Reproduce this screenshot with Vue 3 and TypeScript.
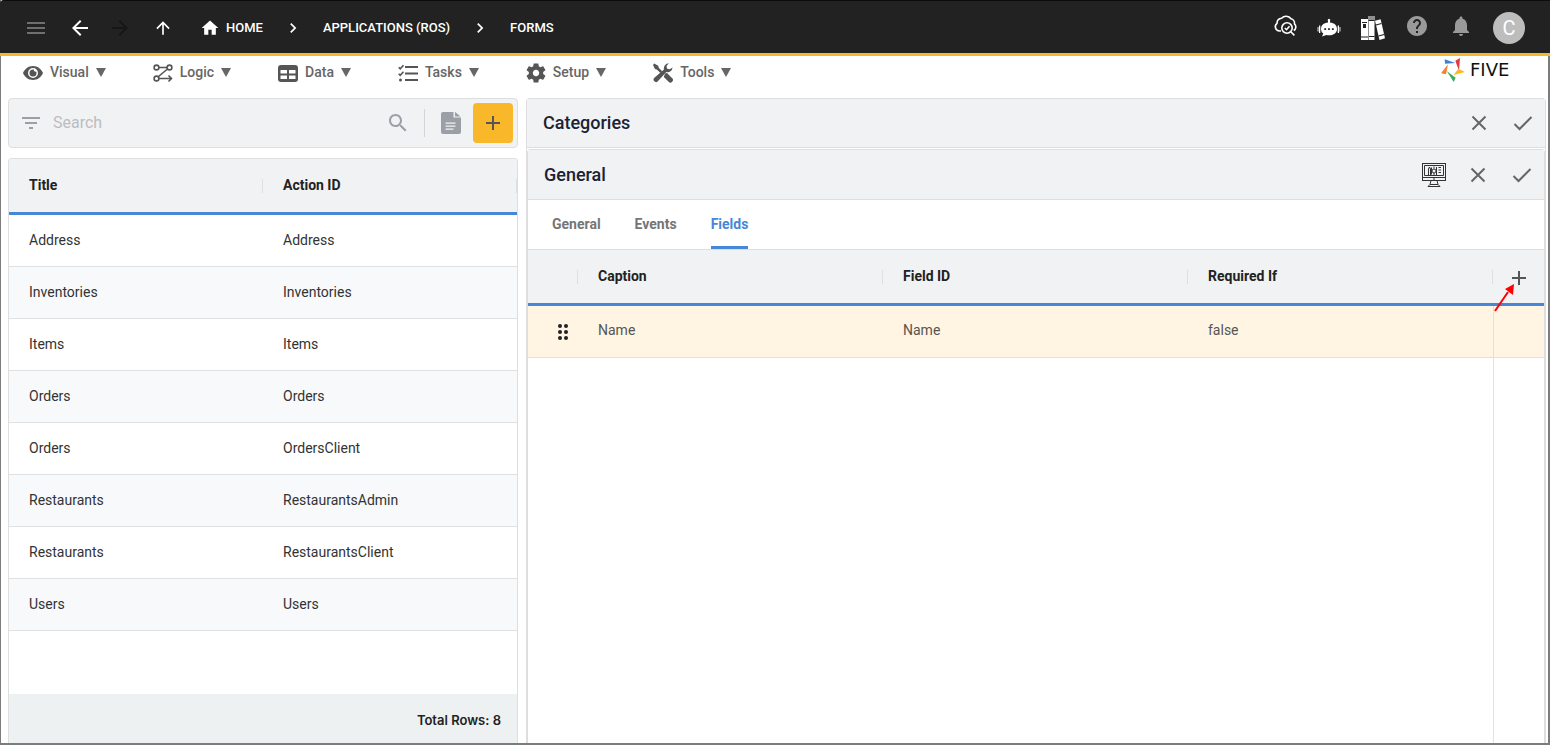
<script setup lang="ts">
import { ref } from 'vue'

interface MenuItem {
  label: string
  icon: string
}

interface ActionRow {
  title: string
  actionId: string
}

const menu: MenuItem[] = [
  { label: 'Visual', icon: 'eye' },
  { label: 'Logic', icon: 'logic' },
  { label: 'Data', icon: 'data' },
  { label: 'Tasks', icon: 'tasks' },
  { label: 'Setup', icon: 'setup' },
  { label: 'Tools', icon: 'tools' },
]

const rows: ActionRow[] = [
  { title: 'Address', actionId: 'Address' },
  { title: 'Inventories', actionId: 'Inventories' },
  { title: 'Items', actionId: 'Items' },
  { title: 'Orders', actionId: 'Orders' },
  { title: 'Orders', actionId: 'OrdersClient' },
  { title: 'Restaurants', actionId: 'RestaurantsAdmin' },
  { title: 'Restaurants', actionId: 'RestaurantsClient' },
  { title: 'Users', actionId: 'Users' },
]

const tabs: string[] = ['General', 'Events', 'Fields']
const activeTab = ref('Fields')
const search = ref('')
</script>

<template>
  <div class="app">
    <header class="topbar">
      <button class="icon-btn dim" aria-label="Menu">
        <svg viewBox="0 0 24 24"><path d="M3 18h18v-2H3v2zm0-5h18v-2H3v2zm0-7v2h18V6H3z" /></svg>
      </button>
      <button class="icon-btn" aria-label="Back">
        <svg viewBox="0 0 24 24"><path d="M20 11H7.83l5.59-5.59L12 4l-8 8 8 8 1.41-1.41L7.83 13H20v-2z" /></svg>
      </button>
      <button class="icon-btn off" aria-label="Forward">
        <svg viewBox="0 0 24 24"><path d="M12 4l-1.41 1.41L16.17 11H4v2h12.17l-5.58 5.59L12 20l8-8z" /></svg>
      </button>
      <button class="icon-btn up" aria-label="Up">
        <svg viewBox="0 0 24 24"><path d="M4 12l1.41 1.41L11 7.83V20h2V7.83l5.58 5.59L20 12l-8-8-8 8z" /></svg>
      </button>
      <nav class="crumbs" aria-label="Breadcrumb">
        <a href="#" class="crumb home">
          <svg viewBox="0 0 24 24"><path d="M10 20v-6h4v6h5v-8h3L12 3 2 12h3v8z" /></svg>HOME</a>
        <svg class="chev" viewBox="0 0 24 24"><path d="M10 6 8.59 7.41 13.17 12l-4.58 4.59L10 18l6-6z" /></svg>
        <a href="#" class="crumb">APPLICATIONS (ROS)</a>
        <svg class="chev" viewBox="0 0 24 24"><path d="M10 6 8.59 7.41 13.17 12l-4.58 4.59L10 18l6-6z" /></svg>
        <a href="#" class="crumb">FORMS</a>
      </nav>
      <div class="actions">
        <button class="icon-btn raised" aria-label="Inspect cloud">
          <svg viewBox="0 0 24 24" class="line">
            <path d="M8 17H6.500A4.300 4.300 0 0 1 4 9.300 5.200 5.200 0 0 1 8.600 4.200 6 6 0 0 1 18 4.800 4.500 4.500 0 0 1 21.500 9.800 4.200 4.200 0 0 1 20.800 16.500" />
            <circle cx="14" cy="14" r="5.200" /><path d="M11.800 14l1.700 1.700 3-3.400M17.800 17.800l3.600 3.600" />
          </svg>
        </button>
        <button class="icon-btn" aria-label="Assistant">
          <svg viewBox="0 0 24 24">
            <path fill-rule="evenodd" d="M11 6.500V5a1.300 1.300 0 1 1 2 0v1.500c4.500.3 7 3 7 6.400 0 4-3.500 6.300-8 6.300-1 0-1.800-.1-2.600-.3L5 20.500l1.300-3C4.800 16.400 4 14.800 4 12.900 4 9.500 6.500 6.800 11 6.500zM7.300 12.200v1.800h1.800v-1.800zm3.800 0v1.800h1.800v-1.800zm3.800 0v1.800h1.800v-1.800z" />
            <path d="M2 9.500h1.300V17H2zM.6 11H1.500v4.500H.6zM20.700 9.500H22V17h-1.300zM22.500 11h.9v4.500h-.9z" />
          </svg>
        </button>
        <button class="icon-btn" aria-label="Library">
          <svg viewBox="0 0 24 24">
            <path d="M0 3h7v21H0z" /><path d="M7.500 0h6v24h-6z" /><path d="M14 4.800l5.600-1.500L24 22.200 18.500 24z" />
            <path class="cut" d="M1 6h5v1H1zM2 8h3v4H2zM0 20.500h7v1H0zM7.500 4h6v1h-6zM7.500 20h6v1h-6zM14.800 8.600l5.500-1.500.3 1-5.500 1.500zM17.400 19.600l5.500-1.500.3 1-5.500 1.500z" />
            <path class="shade" d="M7.500 0h6v4h-6zM7 5h1v19H7z" />
          </svg>
        </button>
        <button class="icon-btn raised gray" aria-label="Help">
          <svg viewBox="0 0 24 24"><path d="M12 2C6.480 2 2 6.480 2 12s4.480 10 10 10 10-4.480 10-10S17.520 2 12 2zm1 17h-2v-2h2v2zm2.070-7.750-.9.920C13.450 12.900 13 13.500 13 15h-2v-.5c0-1.100.450-2.100 1.170-2.830l1.240-1.260c.370-.360.590-.860.590-1.410 0-1.100-.9-2-2-2s-2 .9-2 2H8c0-2.210 1.790-4 4-4s4 1.790 4 4c0 .880-.360 1.680-.930 2.250z" /></svg>
        </button>
        <button class="icon-btn raised gray" aria-label="Notifications">
          <svg viewBox="0 0 24 24"><path d="M12 22c1.100 0 2-.9 2-2h-4c0 1.100.9 2 2 2zm6-6v-5c0-3.070-1.630-5.640-4.500-6.320V4c0-.830-.670-1.500-1.500-1.500s-1.500.670-1.500 1.500v.680C7.640 5.360 6 7.920 6 11v5l-2 2v1h16v-1l-2-2z" /></svg>
        </button>
        <button class="avatar" aria-label="Account">C</button>
      </div>
    </header>

    <nav class="menubar" aria-label="Main">
      <button v-for="item in menu" :key="item.label" class="menu-item">
        <svg v-if="item.icon === 'eye'" viewBox="0 0 20 20">
          <path fill-rule="evenodd" d="M10 3C5.500 3 1.700 5.800 0 10c1.700 4.200 5.500 7 10 7s8.300-2.800 10-7c-1.700-4.200-5.500-7-10-7zm0 2a5 5 0 1 1 0 10 5 5 0 0 1 0-10zm0 1.500a3.500 3.500 0 1 0 3.500 3.500c0-.5-.1-1-.3-1.400A1.800 1.800 0 0 1 10.800 6.600 3 3 0 0 0 10 6.500z" />
        </svg>
        <svg v-else-if="item.icon === 'logic'" viewBox="0 0 20 20" class="outline">
          <circle cx="3.500" cy="4.500" r="2.400" /><circle cx="16.500" cy="4.500" r="2.400" /><circle cx="3.500" cy="15.500" r="2.400" />
          <path d="M6 4.500h8M14.500 6L5.500 13.500M6 15.500h12M15.500 12.500l3 3-3 3" />
        </svg>
        <svg v-else-if="item.icon === 'data'" viewBox="0 0 20 20">
          <path fill-rule="evenodd" d="M3 2h14a3 3 0 0 1 3 3v11a3 3 0 0 1-3 3H3a3 3 0 0 1-3-3V5a3 3 0 0 1 3-3zm-.5 5v3.500H9V7zm8.500 0v3.500h6.500V7zm-8.500 5.500V16H9v-3.500zm8.500 0V16h6.500v-3.500z" />
        </svg>
        <svg v-else-if="item.icon === 'tasks'" viewBox="0 0 20 20">
          <path d="M7 3h13v2H7zM7 9.500h13v2H7zM7 16h13v2H7z" /><circle cx="2.500" cy="17" r="1.500" />
          <path class="tick" d="M.7 4.300l1.500 1.500L5.500 2.200M.7 10.800l1.500 1.500 3.300-3.600" />
        </svg>
        <svg v-else-if="item.icon === 'setup'" viewBox="2 2 20 20">
          <path d="M19.140 12.940c.040-.3.060-.610.060-.940 0-.320-.020-.640-.070-.940l2.030-1.580c.180-.140.230-.410.120-.610l-1.920-3.320c-.120-.220-.370-.290-.590-.220l-2.390.960c-.5-.380-1.030-.7-1.620-.940l-.360-2.540c-.040-.240-.240-.410-.480-.410h-3.840c-.240 0-.430.170-.470.410l-.360 2.540c-.590.240-1.130.570-1.620.940l-2.390-.960c-.220-.080-.470 0-.590.220L2.740 8.870c-.120.210-.080.470.120.610l2.030 1.580c-.050.3-.090.630-.090.940s.020.640.070.940l-2.030 1.580c-.180.140-.230.410-.120.610l1.920 3.320c.120.220.370.290.590.220l2.390-.960c.5.380 1.030.7 1.620.940l.360 2.540c.050.240.240.410.480.410h3.840c.240 0 .440-.170.470-.410l.360-2.540c.590-.240 1.130-.560 1.620-.940l2.390.960c.220.080.470 0 .590-.220l1.920-3.320c.120-.220.070-.470-.120-.610l-2.010-1.580zM12 15.200c-1.800 0-3.200-1.400-3.200-3.200s1.400-3.200 3.200-3.200 3.200 1.400 3.200 3.200-1.400 3.200-3.200 3.200z" />
        </svg>
        <svg v-else viewBox="0 0 20 20">
          <path d="M1.200.5l4 2.300.7 2.100 3.300 3.300-1.800 1.800L4.100 6.700 2 6 0 2z" />
          <path d="M12 10.500l2-.6 5.200 5.300a2.500 2.500 0 0 1-3.600 3.600L10.800 14z" />
          <path d="M19.600 4.600A5 5 0 0 1 13.300 9L4.600 18.600a2.500 2.500 0 0 1-3.500-3.500L11 6.500A5 5 0 0 1 15.800.3L13.500 3.100l.6 2.700 2.600.5z" />
        </svg>
        <span>{{ item.label }}</span>
        <svg class="caret" viewBox="0 0 10 9"><path d="M0 0h10L5 9z" /></svg>
      </button>
      <div class="brand">
        <svg viewBox="573 173 72 72">
          <path fill="#3f7fd6" d="M584 177l32 11-31 2z" />
          <path fill="#e23b3b" d="M616 181l14-8-3 38z" />
          <path fill="#f7b92b" d="M625 205l20 10-34 9z" />
          <path fill="#3fae5a" d="M590 212l27 20-6 13z" />
          <path fill="#f5822b" d="M573 219l21-27-6 30z" />
        </svg>
        <span>FIVE</span>
      </div>
    </nav>

    <main class="workspace">
      <section class="list">
        <div class="searchbar">
          <svg class="filter" viewBox="0 0 24 24"><path d="M10 18h4v-2h-4v2zM3 6v2h18V6H3zm3 7h12v-2H6v2z" /></svg>
          <input v-model="search" type="text" placeholder="Search" aria-label="Search" />
          <button class="icon-btn muted" aria-label="Run search">
            <svg viewBox="0 0 24 24"><path d="M15.500 14h-.790l-.280-.270C15.410 12.590 16 11.110 16 9.500 16 5.910 13.090 3 9.500 3S3 5.910 3 9.500 5.910 16 9.500 16c1.610 0 3.090-.590 4.230-1.570l.270.280v.790l5 4.990L20.490 19l-4.990-5zm-6 0C7.010 14 5 11.990 5 9.500S7.010 5 9.500 5 14 7.010 14 9.500 11.990 14 9.500 14z" /></svg>
          </button>
          <span class="divider"></span>
          <button class="icon-btn muted" aria-label="Report">
            <svg viewBox="0 0 24 24"><path fill-rule="evenodd" d="M5 1h9.500v5.500H22V21a2 2 0 0 1-2 2H4a2 2 0 0 1-2-2V3a2 2 0 0 1 2-2zm1.500 10.500v1.300h10v-1.300zm0 3v1.300h10v-1.300zm0 3v1.300h8v-1.300zM16 .8L21.500 5.500H16z" /></svg>
          </button>
          <button class="add" aria-label="Add record">
            <svg viewBox="0 0 24 24"><path d="M19 13h-6v6h-2v-6H5v-2h6V5h2v6h6v2z" /></svg>
          </button>
        </div>

        <div class="card">
          <table class="grid">
            <thead>
              <tr><th>Title</th><th>Action ID</th></tr>
            </thead>
            <tbody>
              <tr v-for="(row, i) in rows" :key="i">
                <td>{{ row.title }}</td>
                <td>{{ row.actionId }}</td>
              </tr>
            </tbody>
          </table>
          <footer class="total">Total Rows: 8</footer>
        </div>
      </section>

      <section class="detail">
        <div class="bar">
          <h1>Categories</h1>
          <button class="icon-btn tool" aria-label="Cancel">
            <svg viewBox="0 0 24 24"><path d="M5.500 5.500l13 13M18.500 5.500l-13 13" /></svg>
          </button>
          <button class="icon-btn tool" aria-label="Save">
            <svg viewBox="0 0 24 24"><path d="M3.500 13l5 5L20.500 6" /></svg>
          </button>
        </div>

        <div class="inner">
          <div class="bar">
            <h2>General</h2>
            <button class="icon-btn" aria-label="Preview form">
              <svg viewBox="0 0 24 24" class="monitor">
                <rect x=".5" y=".5" width="23" height="17" /><path d="M.5 14.500h23M9 17.500l-1 4h8l-1-4M6 23.500h12M6 23.500l2-2M18 23.500l-2-2" />
                <path d="M2.500 2.500h19v10h-19zM6.500 12V6l1-2 1 2v6M9.500 4.500v7M14.500 4v8M16.500 4.500h2.500M16.500 7h2.500M16.500 9.500h2.500M11 16h2M12 3.500v2M12 10v2" />
                <circle cx="12" cy="8" r="2" />
              </svg>
            </button>
            <button class="icon-btn tool" aria-label="Cancel form">
              <svg viewBox="0 0 24 24"><path d="M5.500 5.500l13 13M18.500 5.500l-13 13" /></svg>
            </button>
            <button class="icon-btn tool" aria-label="Save form">
              <svg viewBox="0 0 24 24"><path d="M3.500 13l5 5L20.500 6" /></svg>
            </button>
          </div>

          <div class="tabs" role="tablist">
            <button
              v-for="tab in tabs"
              :key="tab"
              role="tab"
              :aria-selected="tab === activeTab"
              :class="['tab', { active: tab === activeTab }]"
              @click="activeTab = tab"
            >{{ tab }}</button>
          </div>

          <table class="grid fields">
            <colgroup>
              <col class="narrow" /><col /><col /><col /><col class="action" />
            </colgroup>
            <thead>
              <tr>
                <th></th>
                <th>Caption</th>
                <th>Field ID</th>
                <th>Required If</th>
                <th class="last">
                  <button class="icon-btn plus" aria-label="Add field">
                    <svg viewBox="0 0 24 24"><path d="M19 13h-6v6h-2v-6H5v-2h6V5h2v6h6v2z" /></svg>
                  </button>
                  <svg class="pointer" viewBox="0 0 20 28">
                    <path class="shaft" d="M1 27L14 8" /><path d="M20 0l-1 11-8-6z" />
                  </svg>
                </th>
              </tr>
            </thead>
            <tbody>
              <tr>
                <td class="handle">
                  <svg viewBox="0 0 24 24">
                    <circle cx="9" cy="6" r="2" /><circle cx="15" cy="6" r="2" /><circle cx="9" cy="12" r="2" />
                    <circle cx="15" cy="12" r="2" /><circle cx="9" cy="18" r="2" /><circle cx="15" cy="18" r="2" />
                  </svg>
                </td>
                <td>Name</td>
                <td>Name</td>
                <td>false</td>
                <td class="gutter"></td>
              </tr>
            </tbody>
          </table>
          <div class="rest"><div class="gutter"></div></div>
        </div>
      </section>
    </main>
  </div>
</template>

<style>
body {
  margin: 0;
}
</style>

<style scoped>
.app,
.app * {
  box-sizing: border-box;
}
.app {
  display: flex;
  flex-direction: column;
  min-height: 100vh;
  background: #fff;
  color: #333;
  font-family: Roboto, "Liberation Sans", sans-serif;
  font-size: 14px;
  line-height: 20px;
  border: solid #7c7c7c;
  border-width: 0 2px 2px 1px;
}
button {
  padding: 0;
  border: 0;
  background: none;
  color: inherit;
  font: inherit;
  cursor: pointer;
}
svg {
  display: block;
  flex: none;
  fill: currentColor;
}
.icon-btn {
  flex: none;
  width: 24px;
  height: 24px;
}
.icon-btn svg {
  width: 24px;
  height: 24px;
}

/* top bar */
.topbar {
  display: flex;
  align-items: center;
  height: 56px;
  margin: 0 -2px 0 -1px;
  padding: 2px 25px 0 24px;
  gap: 20px;
  background: #222;
  color: #fff;
  border-top: 1px solid #0c0c0c;
  border-bottom: 3px solid #f8b82a;
  border-top-left-radius: 4px;
}
.topbar .dim {
  color: #6f6f6f;
}
.topbar .off {
  margin-left: -4px;
  color: #161616;
}
.topbar .up svg {
  width: 20px;
  margin: 0 1px;
}
.crumbs {
  display: flex;
  align-items: center;
  gap: 18px;
  margin-left: 4px;
  font-size: 13px;
  font-weight: 500;
}
.crumb {
  display: flex;
  align-items: center;
  gap: 6px;
  color: #fff;
  text-decoration: none;
}
.home svg {
  width: 20px;
  height: 20px;
}
.chev {
  width: 24px;
  height: 20px;
}
.actions {
  display: flex;
  align-items: center;
  gap: 20px;
  margin-left: auto;
}
.raised {
  margin-bottom: 4px;
}
.gray {
  color: #9a9a9a;
}
.line {
  fill: none;
  stroke: #fff;
  stroke-width: 1.6;
}
.cut {
  fill: #222;
}
.shade {
  fill: #8f8f8f;
}
.avatar {
  width: 32px;
  height: 32px;
  border-radius: 50%;
  background: #bdbdbd;
  color: #fff;
  font-size: 20px;
}

/* menu bar */
.menubar {
  display: flex;
  align-items: center;
  height: 42px;
  padding: 0 18px 10px 22px;
  gap: 47px;
}
.menu-item {
  display: flex;
  align-items: center;
  gap: 7px;
  color: #666;
  font-weight: 500;
}
.menu-item svg {
  width: 20px;
  height: 20px;
  margin-top: 2px;
  color: #555;
}
.menu-item .caret {
  width: 10px;
  height: 9px;
  margin-top: 0;
  color: #666;
}
.menu-item .outline,
.tick {
  fill: none;
  stroke: #555;
  stroke-width: 1.6;
}
.brand {
  display: flex;
  align-items: center;
  gap: 5px;
  margin: 0 0 4px auto;
  color: #111;
  font-family: "DejaVu Sans", sans-serif;
  font-size: 18px;
}
.brand svg {
  width: 24px;
  height: 24px;
}
.brand span {
  width: 60px;
}

/* workspace */
.workspace {
  display: grid;
  grid-template-columns: 1fr 2fr;
  flex: 1;
  gap: 8px;
  padding: 0 2px 0 7px;
}
.list {
  display: flex;
  flex-direction: column;
  gap: 10px;
}
.searchbar {
  display: flex;
  align-items: center;
  height: 50px;
  padding: 0 4px 0 10px;
  background: #f1f2f4;
  border: 1px solid #dedede;
  border-radius: 4px;
}
.filter {
  width: 24px;
  height: 24px;
  color: #9aa0a6;
}
.searchbar input {
  flex: 1;
  min-width: 0;
  padding: 0 10px;
  border: 0;
  outline: 0;
  background: none;
  color: #333;
  font: inherit;
  font-size: 16px;
}
.searchbar input::placeholder {
  color: #bcbdbf;
  opacity: 1;
}
.muted {
  color: #9aa0a6;
}
.divider {
  width: 1px;
  height: 28px;
  margin: 0 14px;
  background: #d4d5d7;
}
.add {
  display: flex;
  align-items: center;
  justify-content: center;
  width: 40px;
  height: 40px;
  margin-left: 10px;
  border-radius: 4px;
  background: #f8b82a;
  color: #555;
}
.add svg {
  width: 24px;
  height: 24px;
}
.card {
  display: flex;
  flex-direction: column;
  flex: 1;
  border: 1px solid #dedede;
  border-bottom: 0;
  border-radius: 4px 4px 0 0;
  overflow: hidden;
}
.grid {
  width: 100%;
  table-layout: fixed;
  border-spacing: 0;
}
.grid th {
  position: relative;
  height: 56px;
  padding: 0 20px 2px;
  background: #f1f2f4;
  border-bottom: 3px solid #4787d7;
  color: #222;
  font-weight: 700;
  text-align: left;
}
.grid th::after {
  content: "";
  position: absolute;
  top: 20px;
  right: -1px;
  width: 2px;
  height: 14px;
  background: #dedfe1;
}
.grid td {
  height: 52px;
  padding: 0 20px 2px;
  border-bottom: 1px solid #e0e1e3;
}
.grid tbody tr:nth-child(even) {
  background: #f8f9fb;
}
.total {
  margin-top: auto;
  height: 49px;
  padding: 0 16px;
  background: #edf1f2;
  color: #222;
  font-family: Inter, sans-serif;
  font-size: 13px;
  font-weight: 600;
  line-height: 52px;
  text-align: right;
}

/* detail */
.detail {
  display: flex;
  flex-direction: column;
  gap: 1px;
  border: 1px solid #dedede;
  border-bottom: 0;
  border-radius: 4px 4px 0 0;
}
.bar {
  display: flex;
  align-items: center;
  gap: 20px;
  height: 49px;
  padding: 0 10px 0 16px;
  background: #f1f2f4;
  border-bottom: 1px solid #dedede;
}
.inner .bar {
  height: 50px;
}
h1,
h2 {
  flex: 1;
  margin: 0;
  color: #1b2233;
  font-size: 18px;
  font-weight: 500;
  line-height: 24px;
}
.tool svg {
  fill: none;
  stroke: #666;
  stroke-width: 2;
}
.monitor {
  fill: none;
  stroke: #333;
  stroke-width: 1;
}
.inner {
  display: flex;
  flex-direction: column;
  flex: 1;
  border: 1px solid #dedede;
  border-bottom: 0;
  border-radius: 4px 4px 0 0;
}
.tabs {
  display: flex;
  gap: 34px;
  height: 50px;
  padding: 0 24px;
  border-bottom: 1px solid #dedede;
}
.tab {
  padding-bottom: 2px;
  border: solid transparent;
  border-width: 3px 0;
  color: #757575;
  font-weight: 700;
}
.tab.active {
  border-bottom-color: #4787d7;
  color: #4787d7;
}
.narrow {
  width: 50px;
}
.action {
  width: 51px;
}
.fields tbody tr {
  background: #fff5e2;
}
.fields td {
  padding-bottom: 4px;
  color: #555;
}
.fields .last,
.fields .handle {
  padding: 0;
}
.fields .last::after {
  display: none;
}
.plus {
  display: block;
  margin: 2px 0 0 14px;
  color: #555;
}
.pointer {
  position: absolute;
  left: 1px;
  top: 34px;
  z-index: 1;
  width: 20px;
  height: 28px;
  fill: #f00;
}
.shaft {
  stroke: #f00;
  stroke-width: 2;
}
.handle svg {
  width: 24px;
  height: 24px;
  margin-left: 23px;
  color: #222;
}
.gutter {
  border-left: 1px solid #e0e1e3;
}
.rest {
  display: flex;
  flex: 1;
  justify-content: flex-end;
}
.rest .gutter {
  width: 51px;
}
</style>
